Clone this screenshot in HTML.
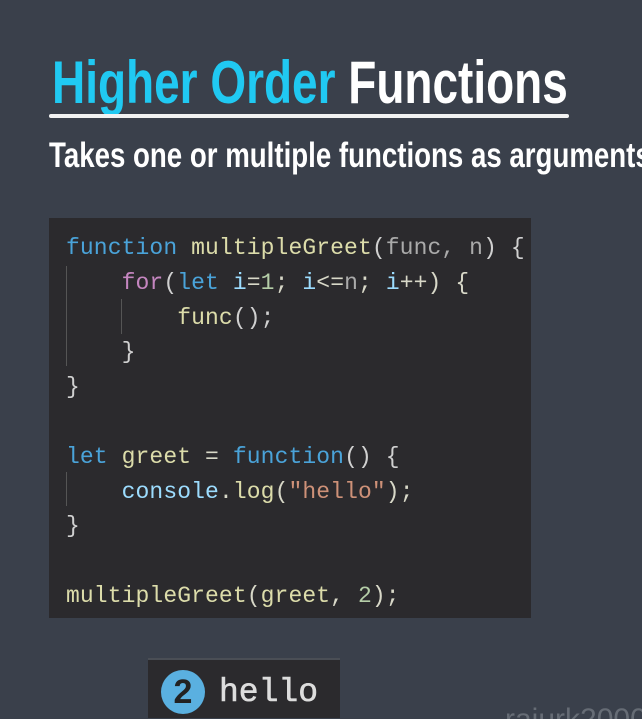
<!DOCTYPE html>
<html style="margin:0;width:642px;height:719px;overflow:hidden"><head><style>
body{margin:0;width:642px;height:719px;background:#3a404b;overflow:hidden;position:relative;font-family:"Liberation Sans",sans-serif}
.t{position:absolute;left:52px;top:50px;font-weight:bold;font-size:60px;line-height:66px;white-space:nowrap;transform:scaleX(0.766);transform-origin:0 0;color:#fff}
.t span{color:#20c9f2}
.ul{position:absolute;left:49px;top:114px;width:520px;height:4px;background:#f2f2f2;border-radius:2px}
.s{position:absolute;left:49px;top:136px;font-weight:bold;font-size:35px;line-height:40px;white-space:nowrap;transform:scaleX(0.79);transform-origin:0 0;color:#fff}
.box{position:absolute;left:49px;top:218px;width:482px;height:400px;background:#2b2a2d}
pre{position:absolute;left:66px;top:231px;margin:0;font-family:"Liberation Mono","DejaVu Sans Mono",monospace;font-size:23px;line-height:34.8px;color:#d8d8c8;letter-spacing:0.1px}
.k{color:#4aa3d9}.f{color:#dcdcaa}.p{color:#aaa}.c{color:#c586c0}.v{color:#9cdcfe}.n{color:#b5cea8}.str{color:#ce9178}.w{color:#d0d0d0}
.g{position:absolute;width:1px;background:#555}
.hb{position:absolute;left:148px;top:658px;width:192px;height:58px;background:#2b2a2d;border-top:2px solid #4a4e55}
.cir{position:absolute;left:161px;top:670px;width:44px;height:44px;border-radius:50%;background:#5ab0e0;color:#222;font-size:34px;font-weight:bold;text-align:center;line-height:44px}
.hl{position:absolute;left:219px;top:674px;font-family:"Liberation Mono",monospace;font-size:33px;color:#ddd;-webkit-text-stroke:0.6px #ddd}
.wm{position:absolute;left:505px;top:703px;font-size:30px;color:#666c75}
</style></head><body>
<div class="t"><span>Higher Order</span> Functions</div>
<div class="ul"></div>
<div class="s">Takes one or multiple functions as arguments</div>
<div class="box"></div>
<div class="g" style="left:66px;top:266px;height:100px"></div>
<div class="g" style="left:121px;top:299px;height:35px"></div>
<div class="g" style="left:66px;top:472px;height:34px"></div>
<pre><span class="k">function</span> <span class="f">multipleGreet</span><span class="w">(</span><span class="p">func, n</span><span class="w">) {</span>
    <span class="c">for</span><span class="w">(</span><span class="k">let</span> <span class="v">i</span>=<span class="n">1</span>; <span class="v">i</span>&lt;=<span class="p">n</span>; <span class="v">i</span>++) {
        <span class="f">func</span><span class="w">();</span>
    <span class="w">}</span>
<span class="w">}</span>

<span class="k">let</span> <span class="f">greet</span> = <span class="k">function</span><span class="w">() {</span>
    <span class="v">console</span>.<span class="f">log</span>(<span class="str">"hello"</span>);
<span class="w">}</span>

<span class="f">multipleGreet</span>(<span class="f">greet</span>, <span class="n">2</span>);</pre>
<div class="hb"></div>
<div class="cir">2</div>
<div class="hl">hello</div>
<div class="wm">rajurk2000</div>
</body></html>
